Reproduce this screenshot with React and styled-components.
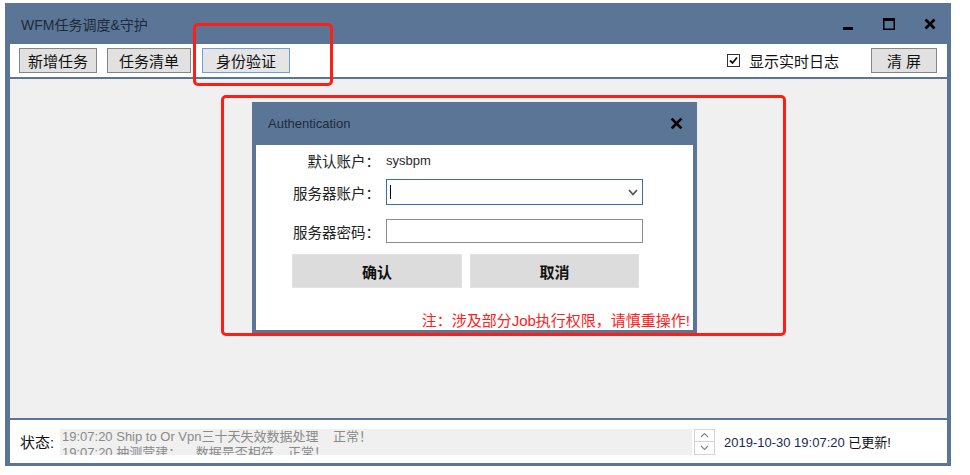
import React from 'react';
import styled, { createGlobalStyle } from 'styled-components';

const FRAME = '#5b7596';

const GlobalStyle = createGlobalStyle`
  body {
    margin: 0;
    background: #fff;
    font-family: 'Liberation Sans', 'Noto Sans CJK SC', sans-serif;
  }
`;

const Window = styled.div`
  position: relative;
  margin: 3px 0 0 5px;
  width: 946px;
  height: 463px;
  box-sizing: border-box;
  padding: 0 4px 3px 5px;
  background: ${FRAME};
  display: flex;
  flex-direction: column;
  gap: 2px;
`;

const TitleBar = styled.div`
  height: 41px;
  margin-bottom: -2px;
  display: flex;
  align-items: center;
  padding: 0 11px;
  color: #1c2a3b;
  font-size: 14px;
`;

const Controls = styled.div`
  margin-left: auto;
  display: flex;
  align-items: center;
  gap: 29px;
`;

const Toolbar = styled.div`
  height: 33px;
  background: #fff;
  display: flex;
  align-items: center;
  padding: 0 10px 0 9px;
  gap: 10px;
`;

const ToolButton = styled.div`
  height: 25px;
  box-sizing: border-box;
  padding: 0 ${p => p.$pad || 7}px;
  margin-left: ${p => p.$ml || 0}px;
  border: 1px solid ${p => (p.$focused ? '#6d9fd6' : '#858585')};
  background: ${p => (p.$focused ? '#e5e5e5' : '#e1e1e1')};
  display: flex;
  align-items: center;
  justify-content: center;
  font-size: 15px;
  color: #111;
  letter-spacing: ${p => p.$spacing || 0};
`;

const Spacer = styled.div`
  flex: 1;
`;

const CheckGroup = styled.label`
  display: flex;
  align-items: center;
  gap: 9px;
  font-size: 15px;
  color: #111;
  margin-right: 22px;
`;

const CheckBox = styled.span`
  width: 13px;
  height: 13px;
  box-sizing: border-box;
  border: 1px solid #333;
  background: #fff;
  display: flex;
  align-items: center;
  justify-content: center;
`;

const Content = styled.div`
  flex: 1;
  background: #f0f0f0;
  position: relative;
`;

const Dialog = styled.div`
  position: absolute;
  left: 242px;
  top: 23px;
  width: 445px;
  height: 232px;
  box-sizing: border-box;
  padding: 0 4px 4px;
  background: ${FRAME};
  display: flex;
  flex-direction: column;
`;

const DialogTitle = styled.div`
  height: 45px;
  display: flex;
  align-items: center;
  justify-content: space-between;
  padding: 0 10px 0 12px;
  font-size: 13px;
  color: #1d2b3d;
`;

const DialogBody = styled.div`
  flex: 1;
  background: #fff;
  padding-top: 5px;
  display: flex;
  flex-direction: column;
`;

const FormRow = styled.div`
  display: flex;
  align-items: center;
  height: ${p => p.$h}px;
  margin-top: ${p => p.$mt || 0}px;
`;

const Label = styled.div`
  width: 124px;
  text-align: right;
  font-size: 14.5px;
  color: #222;
  margin-right: 6px;
`;

const Value = styled.div`
  font-size: 13px;
  color: #2a2a2a;
`;

const Field = styled.div`
  position: relative;
  width: 257px;
  height: 100%;
  box-sizing: border-box;
  background: #fff;
  border: 1px solid ${p => (p.$active ? '#3d6ea6' : '#8c8c8c')};
  display: flex;
  align-items: center;
  padding: 0 4px 0 3px;
`;

const Caret = styled.span`
  width: 1px;
  height: 14px;
  background: #000;
`;

const Chevron = styled.svg`
  margin-left: auto;
`;

const ButtonRow = styled.div`
  display: flex;
  gap: 8px;
  padding-left: 36px;
  margin-top: 11px;
`;

const DialogButton = styled.div`
  width: ${p => p.$w}px;
  height: 34px;
  box-sizing: border-box;
  background: #dcdcdc;
  border: 1px solid #e2e2e2;
  display: flex;
  align-items: center;
  justify-content: center;
  font-size: 15px;
  font-weight: bold;
  color: #111;
`;

const Note = styled.div`
  margin-top: 21px;
  padding-right: 3px;
  text-align: right;
  font-size: 15px;
  color: #ff2020;
`;

const StatusBar = styled.div`
  height: 43px;
  background: #fff;
  display: flex;
  align-items: center;
  padding-left: 10px;
`;

const StatusLabel = styled.div`
  width: 40px;
  font-size: 15px;
  color: #111;
`;

const LogBox = styled.div`
  width: 632px;
  height: 26px;
  background: #f0f0f0;
  overflow: hidden;
  padding-left: 2px;
  box-sizing: border-box;
  font-size: 13px;
  line-height: 16px;
  color: #8a8a8a;
  white-space: pre;
`;

const Spin = styled.div`
  width: 21px;
  height: 26px;
  margin-left: 2px;
  box-sizing: border-box;
  border: 1px solid #d4d4d4;
  display: flex;
  flex-direction: column;
`;

const SpinHalf = styled.div`
  flex: 1;
  display: flex;
  align-items: center;
  justify-content: center;
  & + & {
    border-top: 1px solid #d4d4d4;
  }
`;

const Updated = styled.div`
  margin-left: 9px;
  font-size: 13px;
  color: #111;
`;

const DateText = styled.span`
  color: #1b2a4e;
`;

const Highlight = styled.div`
  position: absolute;
  left: ${p => p.$x}px;
  top: ${p => p.$y}px;
  width: ${p => p.$w}px;
  height: ${p => p.$h}px;
  box-sizing: border-box;
  border: 3px solid #ff1e14;
  border-radius: 5px;
  pointer-events: none;
`;

const MinIcon = () => (
  <svg width="12" height="12" viewBox="0 0 12 12">
    <rect x="1" y="9" width="10" height="3" fill="#000" />
  </svg>
);

const MaxIcon = () => (
  <svg width="12" height="12" viewBox="0 0 12 12">
    <rect x="0.75" y="0.75" width="10.5" height="10.5" fill="none" stroke="#000" strokeWidth="1.5" />
    <rect x="0" y="0" width="12" height="3" fill="#000" />
  </svg>
);

const CloseIcon = ({ size = 12 }) => (
  <svg width={size} height={size} viewBox="0 0 12 12">
    <path d="M1.5 1.5 L10.5 10.5 M10.5 1.5 L1.5 10.5" stroke="#000" strokeWidth="2.6" />
  </svg>
);

const CheckMark = () => (
  <svg width="11" height="11" viewBox="0 0 11 11">
    <path d="M2 5.5 L4.5 8 L9 2.5" fill="none" stroke="#111" strokeWidth="1.8" />
  </svg>
);

const SpinArrow = ({ up }) => (
  <svg width="9" height="6" viewBox="0 0 9 6">
    <path d={up ? 'M1 5 L4.5 1.5 L8 5' : 'M1 1 L4.5 4.5 L8 1'} fill="none" stroke="#888" strokeWidth="1.2" />
  </svg>
);

export default function App() {
  return (
    <>
      <GlobalStyle />
      <Window>
        <TitleBar>
          WFM任务调度&amp;守护
          <Controls>
            <MinIcon />
            <MaxIcon />
            <CloseIcon />
          </Controls>
        </TitleBar>

        <Toolbar>
          <ToolButton $pad={8}>新增任务</ToolButton>
          <ToolButton $pad={11}>任务清单</ToolButton>
          <ToolButton $pad={13} $ml={1} $focused>身份验证</ToolButton>
          <Spacer />
          <CheckGroup>
            <CheckBox>
              <CheckMark />
            </CheckBox>
            显示实时日志
          </CheckGroup>
          <ToolButton $pad={8} style={{ width: 66 }}>清 屏</ToolButton>
        </Toolbar>

        <Content>
          <Dialog>
            <DialogTitle>
              Authentication
              <CloseIcon size={13} />
            </DialogTitle>
            <DialogBody>
              <FormRow $h={20}>
                <Label>默认账户：</Label>
                <Value>sysbpm</Value>
              </FormRow>
              <FormRow $h={26} $mt={9}>
                <Label>服务器账户：</Label>
                <Field $active>
                  <Caret />
                  <Chevron width="10" height="7" viewBox="0 0 10 7">
                    <path d="M1 1 L5 5.5 L9 1" fill="none" stroke="#555" strokeWidth="1.8" />
                  </Chevron>
                </Field>
              </FormRow>
              <FormRow $h={24} $mt={14}>
                <Label>服务器密码：</Label>
                <Field />
              </FormRow>
              <ButtonRow>
                <DialogButton $w={170}>确认</DialogButton>
                <DialogButton $w={169}>取消</DialogButton>
              </ButtonRow>
              <Note>注：涉及部分Job执行权限，请慎重操作!</Note>
            </DialogBody>
          </Dialog>
        </Content>

        <StatusBar>
          <StatusLabel>状态:</StatusLabel>
          <LogBox>
            {'19:07:20 Ship to Or Vpn三十天失效数据处理    正常！\n19:07:20 抽测营建：    数据是否相符    正常！'}
          </LogBox>
          <Spin>
            <SpinHalf><SpinArrow up /></SpinHalf>
            <SpinHalf><SpinArrow /></SpinHalf>
          </Spin>
          <Updated>
            <DateText>2019-10-30 19:07:20</DateText> 已更新!
          </Updated>
        </StatusBar>

        <Highlight $x={188} $y={20} $w={140} $h={63} />
        <Highlight $x={216} $y={92} $w={565} $h={241} />
      </Window>
    </>
  );
}
